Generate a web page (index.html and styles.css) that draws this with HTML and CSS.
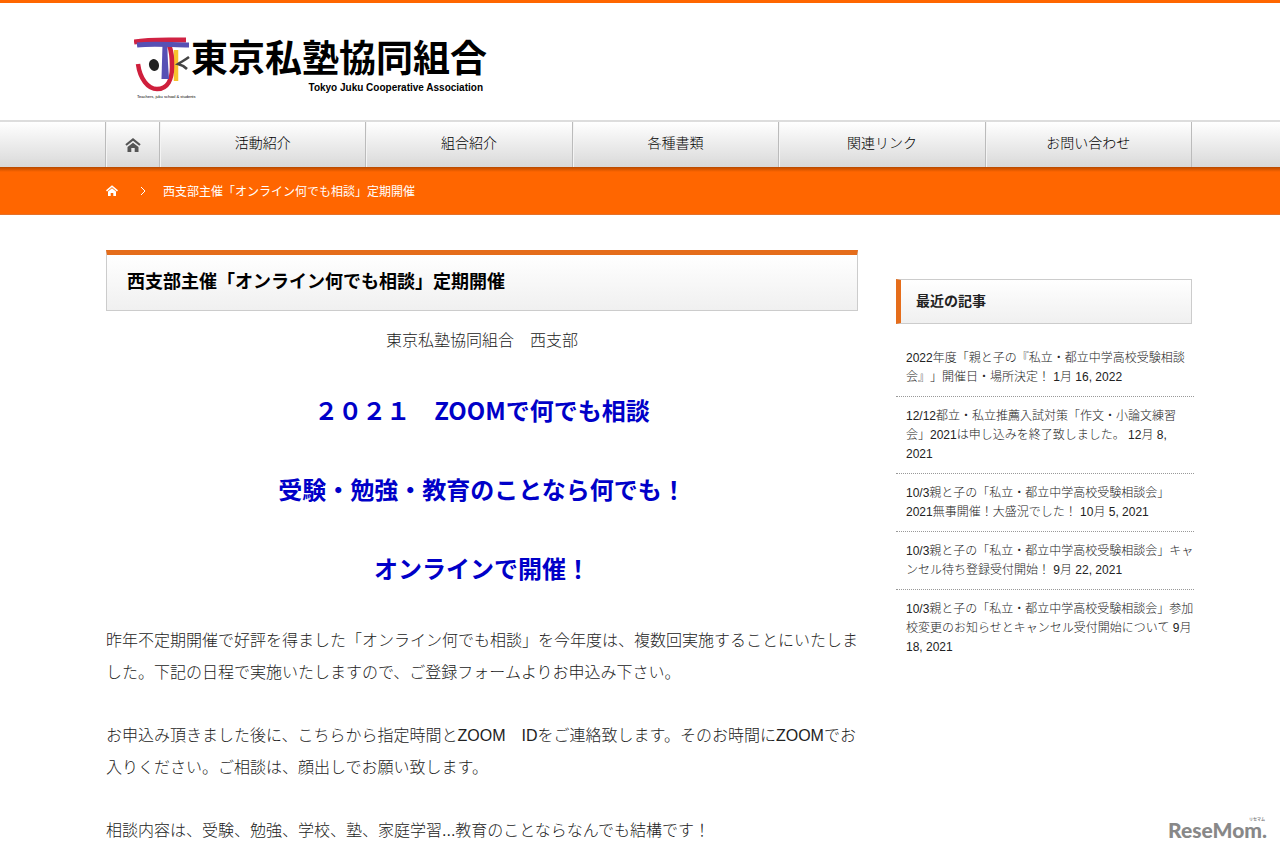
FILE: index.html
```html
<!DOCTYPE html>
<html lang="ja">
<head>
<meta charset="utf-8">
<title>西支部主催「オンライン何でも相談」定期開催</title>
<link rel="stylesheet" href="styles.css">
</head>
<body>
<div class="page">
  <header class="header wrap">
    <a class="logo" href="#">
      <svg class="logo-mark" viewBox="0 0 56 56" aria-hidden="true">
        <path d="M31 7 30 42" stroke="#5750b4" stroke-width="5" fill="none"/>
        <path d="M42 13V44" stroke="#f7c22c" stroke-width="4.500" fill="none"/>
        <path d="M4 27C6 42 14 52 23 52C34 52 38 42 38 30C38 21 38 15 35 8" stroke="#cf1f3c" stroke-width="4.500" fill="none"/>
        <path d="M31 9 33 42" stroke="#5750b4" stroke-width="4" fill="none"/>
        <path d="M0 5C15 2 35 3 52 3" stroke="#d02243" stroke-width="5" fill="none"/>
        <path d="M3 8C20 6 38 8 55 8" stroke="#5750b4" stroke-width="5" fill="none"/>
        <path d="M55 20C51 23 47 25 44 27C48 28 51 30 53 32" stroke="#444" stroke-width="2.500" fill="none"/>
        <ellipse cx="20" cy="28" rx="5" ry="6" transform="rotate(-15 20 28)" fill="#222"/>
      </svg>
      <span class="logo-text">
        <span class="logo-name">東京私塾協同組合</span>
        <span class="logo-en">Tokyo Juku Cooperative Association</span>
      </span>
      <span class="logo-note">Teachers, juku school &amp; students</span>
    </a>
  </header>

  <nav class="nav">
    <div class="nav-list wrap">
      <a class="nav-home" href="#" aria-label="ホーム">
        <svg width="16" height="14" viewBox="0 0 16 14" aria-hidden="true"><path d="M1 7 8 1.500 15 7" fill="none" stroke="#555" stroke-width="2.200"/><path d="M2.500 9 8 4.700 13.500 9V14H9.700V10H6.300V14H2.500Z" fill="#555"/></svg>
      </a>
      <a class="nav-item" href="#">活動紹介</a>
      <a class="nav-item" href="#">組合紹介</a>
      <a class="nav-item" href="#">各種書類</a>
      <a class="nav-item" href="#">関連リンク</a>
      <a class="nav-item" href="#">お問い合わせ</a>
    </div>
  </nav>

  <div class="crumbs">
    <div class="crumbs-row wrap">
      <a class="crumb-home" href="#" aria-label="ホーム">
        <svg width="12" height="11" viewBox="0 0 12 11" aria-hidden="true"><path d="M.5 5.800 6 1.200 11.500 5.800" fill="none" stroke="#fff" stroke-width="1.600"/><path d="M2 6.500 6 3.300 10 6.500V11H7.300V8H4.700V11H2Z" fill="#fff"/></svg>
      </a>
      <svg width="6" height="10" viewBox="0 0 6 10" aria-hidden="true"><path d="M1 1 5 5 1 9" fill="none" stroke="#fff"/></svg>
      <span>西支部主催「オンライン何でも相談」定期開催</span>
    </div>
  </div>

  <div class="content wrap">
    <main class="main">
      <h1 class="title">西支部主催「オンライン何でも相談」定期開催</h1>
      <p class="center">東京私塾協同組合　西支部</p>
      <h2 class="lead">２０２１　ZOOMで何でも相談</h2>
      <h2 class="lead">受験・勉強・教育のことなら何でも！</h2>
      <h2 class="lead">オンラインで開催！</h2>
      <p class="text">昨年不定期開催で好評を得ました「オンライン何でも相談」を今年度は、複数回実施することにいたしました。下記の日程で実施いたしますので、ご登録フォームよりお申込み下さい。</p>
      <p class="text">お申込み頂きました後に、こちらから指定時間とZOOM　IDをご連絡致します。そのお時間にZOOMでお入りください。ご相談は、顔出しでお願い致します。</p>
      <p class="text">相談内容は、受験、勉強、学校、塾、家庭学習...教育のことならなんでも結構です！</p>
    </main>
    <aside class="side">
      <h3 class="side-title">最近の記事</h3>
      <ul class="posts">
        <li><a href="#">2022年度「親と子の『私立・都立中学高校受験相談会』」開催日・場所決定！</a> 1月 16, 2022</li>
        <li><a href="#">12/12都立・私立推薦入試対策「作文・小論文練習会」2021は申し込みを終了致しました。</a> 12月 8, 2021</li>
        <li><a href="#">10/3親と子の「私立・都立中学高校受験相談会」2021無事開催！大盛況でした！</a> 10月 5, 2021</li>
        <li><a href="#">10/3親と子の「私立・都立中学高校受験相談会」キャンセル待ち登録受付開始！</a> 9月 22, 2021</li>
        <li><a href="#">10/3親と子の「私立・都立中学高校受験相談会」参加校変更のお知らせとキャンセル受付開始について</a> 9月 18, 2021</li>
      </ul>
    </aside>
  </div>

  <div class="watermark"><span class="watermark-ruby">リセマム</span>ReseMom.</div>
</div>
</body>
</html>
```
FILE: styles.css
```css
* { box-sizing: border-box; }

body {
  margin: 0;
  background: #fff;
  color: #222;
  font-family: "Liberation Sans", "Noto Sans CJK JP", sans-serif;
  font-size: 16px;
  font-weight: 300;
  text-spacing-trim: space-all;
}

a { color: inherit; text-decoration: none; }

.page {
  position: relative;
  min-height: 100vh;
  border-top: 3px solid #ff6600;
}

.wrap { margin: 0 88px 0 106px; }

.header { padding: 34px 0 19px 28px; }

.logo {
  display: inline-grid;
  grid-template-columns: 56px auto;
  column-gap: 1px;
  color: #000;
}
.logo-mark { width: 56px; height: 56px; }
.logo-text { display: flex; flex-direction: column; }
.logo-name { font-size: 37px; line-height: 44px; font-weight: 700; padding-top: 1px; }
.logo-en {
  padding-right: 4px;
  font-size: 10px;
  line-height: 11px;
  font-weight: 700;
  text-align: right;
}
.logo-note {
  grid-column: 1 / -1;
  padding-left: 3px;
  font-size: 4px;
  line-height: 8px;
}

.nav {
  border-top: 2px solid #ddd;
  background: linear-gradient(#fff, #d9d9d9);
}
.nav-list {
  display: flex;
  height: 45px;
  margin-left: 105px;
  border-left: 1px solid #bbb;
}
.nav-home, .nav-item {
  display: flex;
  align-items: center;
  justify-content: center;
  border-right: 1px solid #bbb;
  box-shadow: inset 1px 0 #f4f4f4;
}
.nav-home { width: 54px; }
.nav-item { flex: 1; padding-bottom: 5px; font-size: 14px; color: #000; }

.crumbs {
  background: linear-gradient(#b84a00, #ff6600 5px);
  border-bottom: 1px solid #e5722a;
  color: #fff;
  font-size: 12px;
  font-weight: 400;
}
.crumbs-row { display: flex; align-items: center; height: 47px; }
.crumb-home { display: flex; margin-right: 22px; }
.crumbs-row span { margin-left: 17px; }

.content { display: flex; gap: 38px; padding-top: 35px; }
.main { flex: 1; min-width: 0; }

.title {
  margin: 0 0 14px;
  padding: 12px 20px 13px;
  border: 1px solid #ccc;
  border-top: 5px solid #e56d1b;
  background: linear-gradient(#fff, #f0f0f0);
  color: #000;
  font-size: 18px;
  line-height: 30px;
}
.center { margin: 0 0 37px; line-height: 32px; text-align: center; }
.lead {
  margin: 0 0 47px;
  color: #0000c8;
  font-family: "Noto Sans CJK JP", sans-serif;
  font-size: 24px;
  line-height: 32px;
  text-align: center;
}
.lead + .text { margin-top: -6px; }
.text { margin: 0 0 31px; line-height: 32px; }
.text:last-child { margin-bottom: 0; }

.side { width: 296px; padding-top: 29px; }
.side-title {
  margin: 0 0 15px;
  padding: 0 15px;
  border: 1px solid #ccc;
  border-left: 5px solid #e56d1b;
  background: linear-gradient(#fff, #f0f0f0);
  color: #222;
  font-size: 14px;
  line-height: 43px;
}
.posts { margin: 0 -2px 0 0; padding: 0; list-style: none; font-size: 12px; line-height: 19px; }
.posts li { padding: 10px 0 9px 10px; border-bottom: 1px dotted #999; }
.posts li:last-child { border-bottom: 0; }

.watermark {
  position: absolute;
  right: 13px;
  bottom: 9px;
  color: #888;
  font-family: Lato, sans-serif;
  font-size: 21px;
  line-height: 26px;
  font-weight: 900;
}
.watermark-ruby {
  position: absolute;
  right: 2px;
  top: -1px;
  font: 700 4px/6px "Noto Sans CJK JP", sans-serif;
}
```
